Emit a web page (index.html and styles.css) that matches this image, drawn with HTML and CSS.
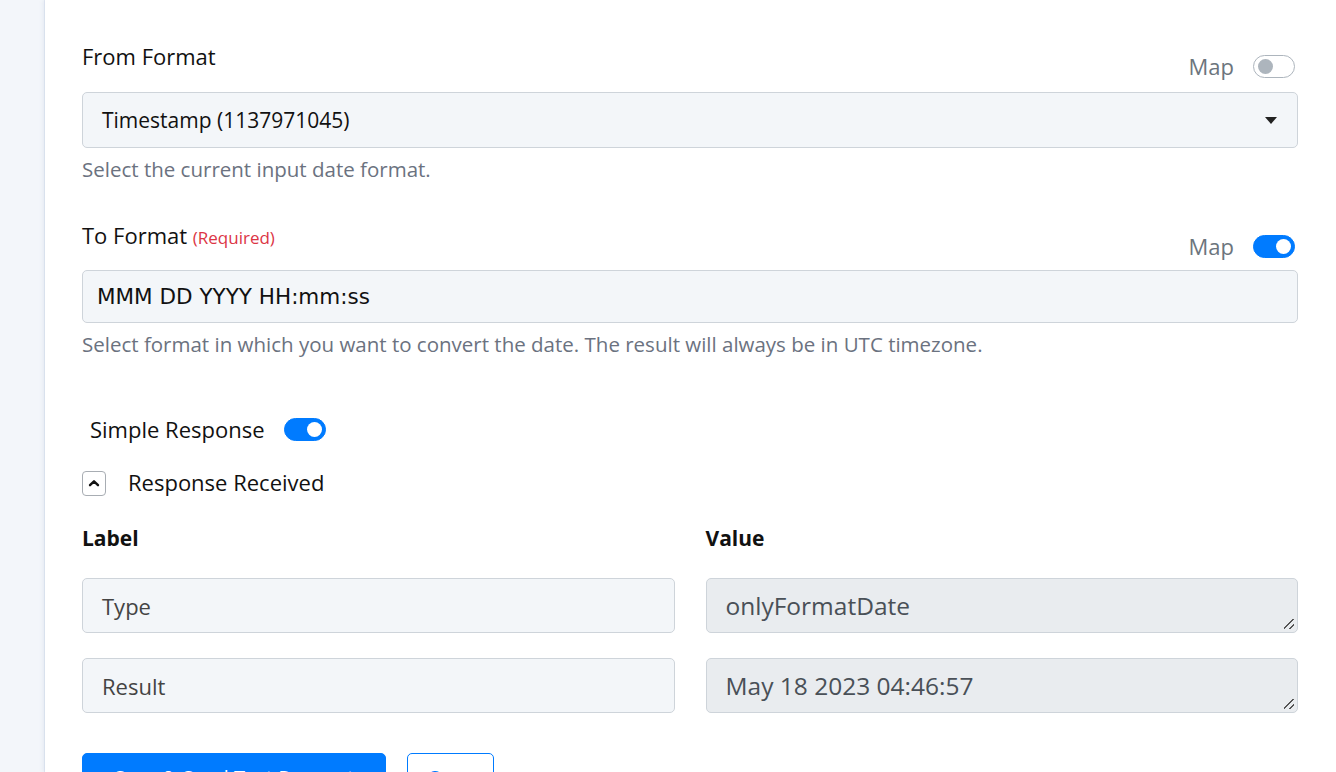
FILE: index.html
```html
<!DOCTYPE html>
<html>
<head>
  <meta charset="utf-8">
  <title>Format Date</title>
  <link rel="stylesheet" href="styles.css">
</head>
<body>
  <div class="layout">
    <aside class="sidebar"></aside>

    <main class="panel">
      <!-- From Format -->
      <div class="field">
        <div class="field-head">
          <label class="field-label">From Format</label>
          <div class="map-switch">
            <span>Map</span>
            <span class="toggle"></span>
          </div>
        </div>
        <div class="select-box">
          <span>Timestamp (1137971045)</span>
          <svg class="caret" width="12" height="7" viewBox="0 0 12 7"><path d="M0 0h12L6 7z" fill="#222"/></svg>
        </div>
        <p class="hint">Select the current input date format.</p>
      </div>

      <!-- To Format -->
      <div class="field">
        <div class="field-head">
          <label class="field-label">To Format <small class="required">(Required)</small></label>
          <div class="map-switch">
            <span>Map</span>
            <span class="toggle on"></span>
          </div>
        </div>
        <div class="text-input mono">MMM DD YYYY HH:mm:ss</div>
        <p class="hint">Select format in which you want to convert the date. The result will always be in UTC timezone.</p>
      </div>

      <div class="simple-response">
        <span>Simple Response</span>
        <span class="toggle on"></span>
      </div>

      <div class="collapse-row">
        <button class="collapse-btn">
          <svg width="12" height="8" viewBox="0 0 12 8"><path d="M2 6.2L6 2.3l4 3.9" fill="none" stroke="#111" stroke-width="2.4" stroke-linecap="round" stroke-linejoin="round"/></svg>
        </button>
        <span>Response Received</span>
      </div>

      <div class="response-grid">
        <div class="col-title">Label</div>
        <div class="col-title">Value</div>

        <div class="cell">Type</div>
        <div class="cell readonly">onlyFormatDate<span class="grip"></span></div>

        <div class="cell">Result</div>
        <div class="cell readonly">May 18 2023 04:46:57<span class="grip"></span></div>
      </div>

      <div class="actions">
        <button class="btn btn-primary">Save &amp; Send Test Request</button>
        <button class="btn btn-outline">Save</button>
      </div>
    </main>
  </div>
</body>
</html>
```

FILE: styles.css
```css
* {
  margin: 0;
  padding: 0;
  box-sizing: border-box;
}

body {
  font-family: "Open Sans", "Noto Sans", sans-serif;
  color: #111;
  background: #f3f6fa;
  height: 772px;
  overflow: hidden;
}

.layout {
  display: flex;
  height: 100%;
}

/* left rail */
.sidebar {
  width: 45px;
  flex: none;
  background: #f3f6fa;
  border-right: 1px solid #e3e9f3;
}

.panel {
  flex: 1;
  background: #fff;
  padding: 42px 38px 0 37px;
  box-shadow: -2px 0 4px rgba(120, 140, 180, 0.12);
}

/* form fields */
.field {
  margin-bottom: 41px;
}

.field + .field {
  margin-bottom: 58px;
}

.field-head {
  display: flex;
  justify-content: space-between;
  align-items: flex-start;
  height: 50px;
}

.field + .field .field-head {
  height: 48px;
}

.field-label {
  font-size: 22px;
  line-height: 28px;
  color: #111;
}

.field + .field .field-label {
  line-height: 26px;
}

.required {
  font-size: 17px;
  color: #dc3545;
}

.map-switch {
  display: flex;
  align-items: center;
  gap: 19px;
  height: 23px;
  margin-top: 13px;
  margin-right: 3px;
  font-size: 22px;
  line-height: 23px;
  color: #6c757d;
}

.toggle {
  position: relative;
  display: inline-block;
  width: 42px;
  height: 23px;
  border: 1px solid #adb5bd;
  border-radius: 12px;
  background: #fff;
}

.toggle::after {
  content: "";
  position: absolute;
  top: 3px;
  left: 4px;
  width: 15px;
  height: 15px;
  border-radius: 50%;
  background: #adb5bd;
}

.toggle.on {
  background: #007bff;
  border-color: #007bff;
}

.toggle.on::after {
  left: auto;
  right: 3px;
  background: #fff;
}

.select-box,
.text-input {
  display: flex;
  align-items: center;
  justify-content: space-between;
  background: #f3f6f9;
  border: 1px solid #ced4da;
  border-radius: 5px;
}

.select-box {
  height: 56px;
  padding: 0 20px 0 19px;
  font-size: 21px;
}

.text-input {
  height: 53px;
  padding: 0 14px;
}

.mono {
  font-family: "DejaVu Sans", Verdana, sans-serif;
  font-size: 21.5px;
}

.hint {
  margin-top: 9px;
  font-size: 20.5px;
  line-height: 24px;
  color: #6b7280;
}

/* simple response */
.simple-response {
  display: flex;
  align-items: center;
  gap: 19px;
  height: 30px;
  padding-left: 8px;
  font-size: 22px;
}

.collapse-row {
  display: flex;
  align-items: center;
  gap: 22px;
  height: 30px;
  margin-top: 23px;
  font-size: 22px;
}

.collapse-btn {
  width: 24px;
  height: 25px;
  margin-top: 2px;
  display: flex;
  align-items: center;
  justify-content: center;
  background: #fff;
  border: 1px solid #a8adb3;
  border-radius: 4px;
}

.response-grid {
  display: grid;
  grid-template-columns: 1fr 1fr;
  column-gap: 31px;
  row-gap: 25px;
  margin-top: 27px;
}

.col-title {
  font-size: 21px;
  font-weight: 700;
  line-height: 28px;
  height: 29px;
}

.cell {
  position: relative;
  height: 55px;
  display: flex;
  align-items: center;
  padding: 0 19px;
  font-size: 22px;
  color: #444;
  background: #f3f6f9;
  border: 1px solid #ced4da;
  border-radius: 5px;
}

.cell.readonly {
  font-size: 24.5px;
  background: #e9ecef;
  color: #495057;
}

/* textarea resize grip */
.grip {
  position: absolute;
  right: 3px;
  bottom: 3px;
  width: 10px;
  height: 10px;
  background: linear-gradient(135deg, transparent 45%, #555 45%, #555 55%, transparent 55%, transparent 72%, #555 72%, #555 82%, transparent 82%);
}

.actions {
  display: flex;
  gap: 21px;
  margin-top: 40px;
}

.btn {
  height: 48px;
  padding: 0 20px;
  font-family: inherit;
  font-size: 20px;
  border-radius: 5px;
  align-self: flex-start;
}

.btn-primary {
  width: 304px;
  background: #007bff;
  border: 1px solid #007bff;
  color: #fff;
}

.btn-outline {
  width: 87px;
  background: #fff;
  border: 1px solid #007bff;
  color: #007bff;
}
```
